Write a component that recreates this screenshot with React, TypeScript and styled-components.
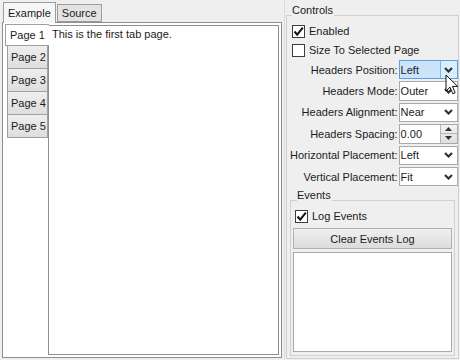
import { Fragment } from "react";
import styled, { createGlobalStyle } from "styled-components";

const GlobalStyle = createGlobalStyle`
  html, body { margin: 0; padding: 0; }
  body {
    background: #efefef;
    font-family: "Liberation Sans", Arial, sans-serif;
    font-size: 11px;
    color: #1b1b1b;
  }
  * { box-sizing: border-box; }
`;

const Window = styled.div`
  position: relative;
  display: flex;
  width: 460px;
  height: 360px;
  overflow: hidden;
`;

const LeftPane = styled.div`
  width: 282px;
  flex-shrink: 0;
  padding: 2px 0 2px 2px;
  display: flex;
  flex-direction: column;
`;

const TabStrip = styled.div`
  display: flex;
  align-items: flex-end;
  height: 20px;
  padding-left: 1px;
  gap: 1px;
`;

const TopTab = styled.div<{ $active?: boolean }>`
  position: relative;
  z-index: ${(p) => (p.$active ? 1 : 0)};
  height: ${(p) => (p.$active ? 21 : 18)}px;
  margin-bottom: ${(p) => (p.$active ? -1 : 0)}px;
  padding: 0 4px;
  display: flex;
  align-items: center;
  white-space: nowrap;
  border: 1px solid #9c9ca0;
  border-bottom: ${(p) => (p.$active ? "none" : "1px solid #9c9ca0")};
  background: ${(p) => (p.$active ? "#f6f6f6" : "#e3e3e3")};
`;

const OuterPanel = styled.div`
  flex: 1;
  display: flex;
  border: 1px solid #8d8d92;
  background: #fff;
  padding: 1px 2px 2px 2px;
`;

const SideTabs = styled.div`
  width: 43px;
  flex-shrink: 0;
  display: flex;
  flex-direction: column;
`;

const SideTab = styled.div<{ $active?: boolean }>`
  position: relative;
  z-index: ${(p) => (p.$active ? 1 : 0)};
  height: ${(p) => (p.$active ? 22 : 23)}px;
  margin: ${(p) => (p.$active ? "0 -1px 0 0" : "0 0 0 2px")};
  padding-left: ${(p) => (p.$active ? 4 : 3)}px;
  display: flex;
  align-items: center;
  white-space: nowrap;
  border: 1px solid #a0a0a4;
  border-right: ${(p) => (p.$active ? "none" : "1px solid #a0a0a4")};
  border-top: ${(p) => (p.$active ? "1px solid #a0a0a4" : "none")};
  background: ${(p) =>
    p.$active ? "#fff" : "linear-gradient(#eeeeee, #dedede)"};
`;

const PagePanel = styled.div`
  flex: 1;
  margin-top: 1px;
  border: 1px solid #8d8d92;
  padding: 1px 3px;
  line-height: 14px;
`;

const RightPane = styled.div`
  flex: 1;
  min-width: 0;
  display: flex;
  margin-left: 2px;
  padding: 0 1px 1px 1px;
  border-left: 1px solid #dcdcdc;
`;

const Group = styled.fieldset<{ $top: number; $padX: number }>`
  margin: ${(p) => p.$top}px 0 0 0;
  padding: 0 ${(p) => p.$padX}px 2px ${(p) => p.$padX}px;
  border: 1px solid #d0d0d0;
  min-width: 0;
  flex: 1;
  display: flex;
  flex-direction: column;
`;

const Legend = styled.legend<{ $indent: number }>`
  margin-left: ${(p) => p.$indent}px;
  padding: 0 1px 10px 0;
  line-height: 12px;
`;

const CheckRow = styled.label<{ $top: number }>`
  display: flex;
  align-items: center;
  gap: 4px;
  height: 20px;
  margin: ${(p) => p.$top}px 0 0 2px;
`;

const Box = styled.span`
  width: 13px;
  height: 13px;
  border: 1px solid #3c3c3c;
  background: #fff;
  display: flex;
  align-items: center;
  justify-content: center;
`;

const Fields = styled.div`
  display: grid;
  grid-template-columns: 1fr 59px;
  row-gap: 2px;
  margin-top: 0;
  margin-right: 1px;
  align-items: center;
`;

const FieldLabel = styled.span`
  text-align: right;
  white-space: nowrap;
  padding-right: 1px;
`;

const Combo = styled.div<{ $focus?: boolean }>`
  height: 19.4px;
  display: flex;
  border: 1px solid ${(p) => (p.$focus ? "#5d9de0" : "#a9a9ab")};
  background: ${(p) => (p.$focus ? "#cce4fa" : "#fff")};
`;

const ComboText = styled.span`
  flex: 1;
  display: flex;
  align-items: center;
  padding-left: 1px;
`;

const DropButton = styled.span<{ $focus?: boolean }>`
  width: 17px;
  display: flex;
  align-items: center;
  justify-content: center;
  border-left: 1px solid ${(p) => (p.$focus ? "#7fb2e6" : "transparent")};
  background: ${(p) => (p.$focus ? "#dbeefe" : "transparent")};
`;

const Spin = styled.span`
  width: 17px;
  display: flex;
  flex-direction: column;
  border-left: 1px solid #b4b4b6;
  background: linear-gradient(#f2f2f2, #dedede);
`;

const SpinHalf = styled.span<{ $down?: boolean }>`
  flex: 1;
  display: flex;
  align-items: center;
  justify-content: center;
  border-top: ${(p) => (p.$down ? "1px solid #b4b4b6" : "none")};
`;

const Button = styled.div`
  height: 21px;
  margin-top: 2px;
  display: flex;
  align-items: center;
  justify-content: center;
  border: 1px solid #b0b0b2;
  background: linear-gradient(#f0f0f0, #dcdcdc);
`;

const LogList = styled.div`
  flex: 1;
  margin-top: 3px;
  margin-bottom: 1px;
  border: 1px solid #a9a9ab;
  background: #fff;
`;

const Cursor = styled.svg`
  position: absolute;
  left: 445px;
  top: 74px;
  pointer-events: none;
`;

const Check = () => (
  <svg width="11" height="11" viewBox="0 0 11 11">
    <polyline points="1.5,5.5 4.2,8.6 9.8,1.6" fill="none" stroke="#111" strokeWidth="2" />
  </svg>
);

const Chevron = () => (
  <svg width="9" height="6" viewBox="0 0 9 6">
    <polyline points="1,1 4.5,4.5 8,1" fill="none" stroke="#333" strokeWidth="2.2" />
  </svg>
);

const Tri = ({ down }: { down?: boolean }) => (
  <svg width="7" height="4" viewBox="0 0 7 4">
    <polygon points={down ? "0,0 7,0 3.5,4" : "0,4 7,4 3.5,0"} fill="#333" />
  </svg>
);

interface FieldDef {
  label: string;
  value: string;
  kind?: "focus" | "spin";
}

const fields: FieldDef[] = [
  { label: "Headers Position:", value: "Left", kind: "focus" },
  { label: "Headers Mode:", value: "Outer" },
  { label: "Headers Alignment:", value: "Near" },
  { label: "Headers Spacing:", value: "0.00", kind: "spin" },
  { label: "Horizontal Placement:", value: "Left" },
  { label: "Vertical Placement:", value: "Fit" },
];

const pages = ["Page 1", "Page 2", "Page 3", "Page 4", "Page 5"];

export default function App() {
  return (
    <Window>
      <GlobalStyle />
      <LeftPane>
        <TabStrip>
          <TopTab $active>Example</TopTab>
          <TopTab>Source</TopTab>
        </TabStrip>
        <OuterPanel>
          <SideTabs>
            {pages.map((p, i) => (
              <SideTab key={p} $active={i === 0}>
                {p}
              </SideTab>
            ))}
          </SideTabs>
          <PagePanel>This is the first tab page.</PagePanel>
        </OuterPanel>
      </LeftPane>
      <RightPane>
        <Group $top={4} $padX={3}>
          <Legend $indent={2}>Controls</Legend>
          <CheckRow $top={-5}>
            <Box>
              <Check />
            </Box>
            Enabled
          </CheckRow>
          <CheckRow $top={-1}>
            <Box />
            Size To Selected Page
          </CheckRow>
          <Fields>
            {fields.map((f) => (
              <Fragment key={f.label}>
                <FieldLabel>{f.label}</FieldLabel>
                <Combo $focus={f.kind === "focus"}>
                  <ComboText>{f.value}</ComboText>
                  {f.kind === "spin" ? (
                    <Spin>
                      <SpinHalf>
                        <Tri />
                      </SpinHalf>
                      <SpinHalf $down>
                        <Tri down />
                      </SpinHalf>
                    </Spin>
                  ) : (
                    <DropButton $focus={f.kind === "focus"}>
                      <Chevron />
                    </DropButton>
                  )}
                </Combo>
              </Fragment>
            ))}
          </Fields>
          <Group $top={3} $padX={2}>
            <Legend $indent={4}>Events</Legend>
            <CheckRow $top={-5}>
              <Box>
                <Check />
              </Box>
              Log Events
            </CheckRow>
            <Button>Clear Events Log</Button>
            <LogList />
          </Group>
        </Group>
      </RightPane>
      <Cursor width="14" height="22" viewBox="0 0 14 22">
        <path
          d="M1,1 L1,17 L5,13.2 L7.8,19.8 L10.2,18.8 L7.5,12.4 L12.6,12.4 Z"
          fill="#fff"
          stroke="#111"
          strokeWidth="1"
          strokeLinejoin="round"
        />
      </Cursor>
    </Window>
  );
}
